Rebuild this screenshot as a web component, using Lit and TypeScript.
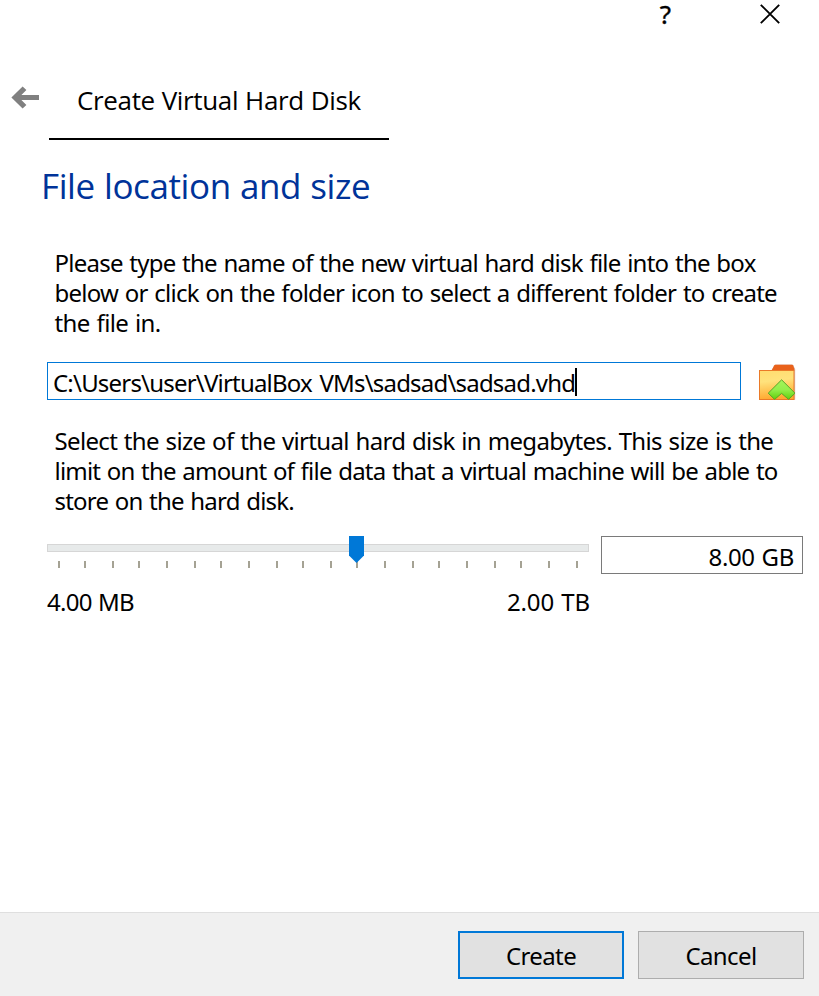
import { LitElement, html, css, svg } from "lit";
import { customElement } from "lit/decorators.js";

interface Line {
  text: string;
  spacing: number;
}

const NAME_HINT: Line[] = [
  { text: "Please type the name of the new virtual hard disk file into the box", spacing: -0.75 },
  { text: "below or click on the folder icon to select a different folder to create", spacing: -0.74 },
  { text: "the file in.", spacing: -0.6 },
];

const SIZE_HINT: Line[] = [
  { text: "Select the size of the virtual hard disk in megabytes. This size is the", spacing: -0.66 },
  { text: "limit on the amount of file data that a virtual machine will be able to", spacing: -0.79 },
  { text: "store on the hard disk.", spacing: -0.79 },
];

const TICKS = Array.from({ length: 20 }, (_, i) => 11 + 2 * Math.floor((i * 518) / 19 / 2));

@customElement("app-root")
export class AppRoot extends LitElement {
  static styles = css`
    :host {
      display: flex;
      flex-direction: column;
      box-sizing: border-box;
      height: 996px;
      overflow: hidden;
      background: #fff;
      color: #000;
      font: 24px/30px "Noto Sans", "Open Sans", sans-serif;
    }
    svg {
      display: block;
      flex: none;
    }
    .titlebar {
      display: flex;
      justify-content: flex-end;
      gap: 88px;
      height: 30px;
      padding-right: 39px;
    }
    .help {
      font-size: 26px;
      line-height: 28px;
      width: 13px;
      text-align: center;
      -webkit-text-stroke: 0.4px #000;
    }
    .close {
      margin-top: 4px;
    }
    .header {
      display: flex;
      height: 55px;
      margin-top: 55px;
      padding-left: 11px;
      box-sizing: border-box;
    }
    .back {
      margin-top: 1px;
    }
    .caption {
      box-sizing: border-box;
      width: 340px;
      margin-left: 10px;
      padding-left: 28px;
      border-bottom: 2px solid #000;
      font: 26px/30px "Open Sans", "Noto Sans", sans-serif;
      letter-spacing: -0.35px;
      word-spacing: 0.5px;
      white-space: nowrap;
    }
    .heading {
      margin: 24px 0 0 41px;
      font: 35px/44px "Open Sans", "Noto Sans", sans-serif;
      letter-spacing: -0.4px;
      word-spacing: 0.5px;
      color: #003399;
    }
    .hint {
      margin: 40px 0 0 54.5px;
    }
    .hint.size {
      margin-top: 26px;
    }
    .line {
      white-space: nowrap;
      word-spacing: 1.1px;
    }
    .location {
      display: flex;
      gap: 17px;
      margin: 24px 0 0 47px;
    }
    .field {
      display: flex;
      box-sizing: border-box;
      height: 38px;
      border: 1px solid #0078d7;
      white-space: nowrap;
    }
    .path {
      width: 694px;
      padding: 5px 4px 0 5px;
      letter-spacing: -0.8px;
      word-spacing: 2px;
    }
    .caret {
      width: 2px;
      height: 28px;
      background: #000;
    }
    .sizing {
      display: flex;
      gap: 12px;
      margin: 20px 0 0 47px;
    }
    .slider {
      width: 542px;
    }
    .limits {
      display: flex;
      justify-content: space-between;
      margin-top: 18px;
    }
    .min {
      letter-spacing: -0.75px;
      word-spacing: 1px;
    }
    .max {
      letter-spacing: -0.1px;
      word-spacing: 1px;
      margin-right: -1px;
    }
    .amount {
      width: 202px;
      justify-content: flex-end;
      padding: 5px 8px 0;
      border-color: #7a7a7a;
      letter-spacing: -0.35px;
      word-spacing: 1px;
    }
    .footer {
      display: flex;
      justify-content: flex-end;
      gap: 14px;
      box-sizing: border-box;
      height: 84px;
      margin-top: auto;
      padding: 18px 15px 0 0;
      border-top: 1px solid #dfdfdf;
      background: #f0f0f0;
    }
    .button {
      box-sizing: border-box;
      width: 166px;
      height: 48px;
      margin: 0;
      padding: 2px 0 0;
      border: 1px solid #adadad;
      border-radius: 0;
      background: #e1e1e1;
      color: #000;
      font: inherit;
      letter-spacing: -0.6px;
    }
    .button.primary {
      border: 2px solid #0078d7;
    }
  `;

  private lines(lines: Line[]) {
    return lines.map(
      (l) => html`<div class="line" style="letter-spacing:${l.spacing}px">${l.text}</div>`
    );
  }

  render() {
    return html`
      <div class="titlebar">
        <div class="help">?</div>
        <svg class="close" width="20" height="20" viewBox="0 0 20 20">
          <path d="M0.8 0.8 19.2 19.2M19.2 0.8 0.8 19.2" stroke="#000" stroke-width="1.9" fill="none" />
        </svg>
      </div>

      <div class="header">
        <svg class="back" width="28" height="24" viewBox="0 0 28 24">
          <path d="M28 9H10.4L15.4 4 11.6 0.4 0.4 11.5 11.6 22.6 15.4 19 10.4 14H28z" fill="#808080" />
        </svg>
        <div class="caption">Create Virtual Hard Disk</div>
      </div>

      <div class="heading">File location and size</div>

      <div class="hint">${this.lines(NAME_HINT)}</div>

      <div class="location">
        <div class="field path">C:\\Users\\user\\VirtualBox VMs\\sadsad\\sadsad.vhd<div class="caret"></div></div>
        <svg width="39" height="38" viewBox="0 0 39 38">
          <defs>
            <linearGradient id="folder" x1="0" y1="0" x2="0.15" y2="1">
              <stop offset="0" stop-color="#ffdc70" />
              <stop offset="0.4" stop-color="#ffe27c" />
              <stop offset="1" stop-color="#ffa930" />
            </linearGradient>
            <linearGradient id="arrow" x1="0" y1="0" x2="0" y2="1">
              <stop offset="0" stop-color="#a4f45a" />
              <stop offset="0.5" stop-color="#94ee4c" />
              <stop offset="1" stop-color="#5fd00c" />
            </linearGradient>
          </defs>
          <path d="M13.5 8.5 16.2 3.2Q16.7 2.4 17.5 2.4H34Q35 2.4 35.4 3.4L37.2 7V37.8H35V8.5z" fill="#d9c0b8" />
          <path d="M13.5 8.5 16.2 3.6Q16.7 2.8 17.5 2.8H34Q34.8 2.8 35.2 3.6L36.4 7V8.5z" fill="#e9621b" />
          <rect x="1.5" y="8.5" width="34.5" height="29" fill="url(#folder)" stroke="#ea7a28" />
          <path d="M23.6 17.8 37 31.2 30.6 37.4 23.6 31.4 16.6 37.4 10.2 31.2z" fill="url(#arrow)" stroke="#5ba32a" stroke-width="1" />
        </svg>
      </div>

      <div class="hint size">${this.lines(SIZE_HINT)}</div>

      <div class="sizing">
        <div class="slider">
          <svg width="542" height="33" viewBox="0 0 542 33">
            <rect x="0.5" y="8.5" width="541" height="7" fill="#e7eaea" stroke="#d6d6d6" />
            ${TICKS.map((x) => svg`<rect x=${x} y="25" width="2" height="7" fill="#a5a294" />`)}
            <path d="M302 0H317V19.5L309.5 27 302 19.5z" fill="#0078d7" />
          </svg>
          <div class="limits">
            <span class="min">4.00 MB</span>
            <span class="max">2.00 TB</span>
          </div>
        </div>
        <div class="field amount">8.00 GB</div>
      </div>

      <div class="footer">
        <button class="button primary">Create</button>
        <button class="button">Cancel</button>
      </div>
    `;
  }
}
